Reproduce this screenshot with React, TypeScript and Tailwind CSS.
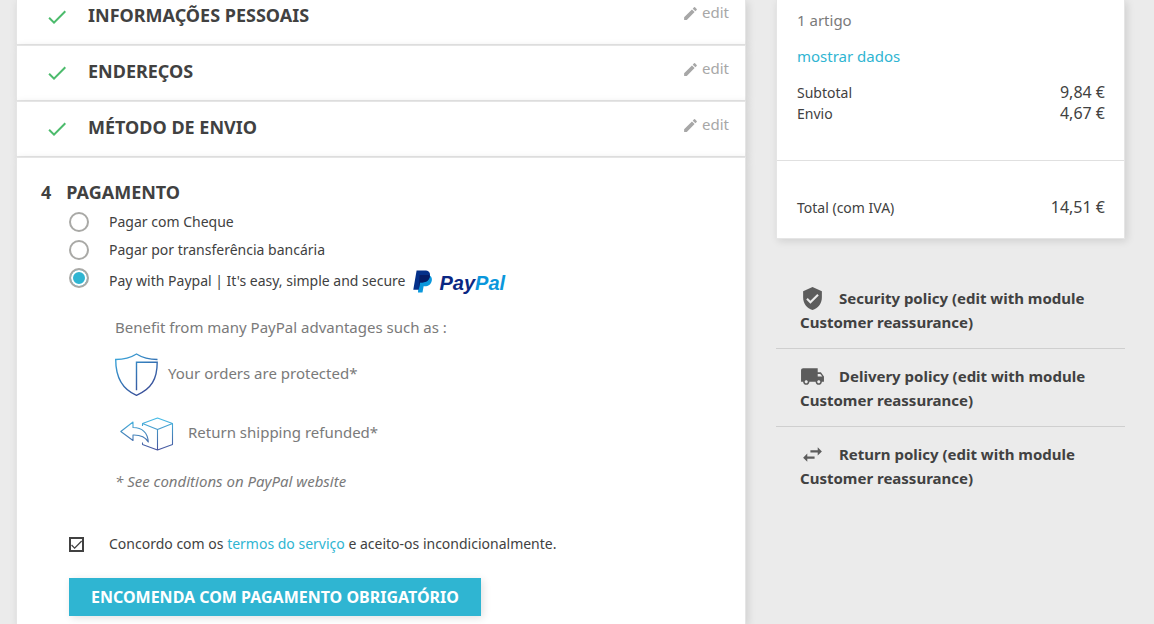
import type { ReactNode } from "react";
import {
  MdDone,
  MdEdit,
  MdLocalShipping,
  MdSwapHoriz,
  MdVerifiedUser,
} from "react-icons/md";

function DoneStep({ title, first = false }: { title: string; first?: boolean }) {
  return (
    <section
      className={
        "flex items-start justify-between border-x border-b border-[#e5e5e5] bg-white pr-4 pl-7 shadow-[2px_2px_8px_0_rgba(0,0,0,0.12)] " +
        (first ? "h-[45px]" : "h-14 border-t pt-2.5")
      }
    >
      <h1 className="flex items-center text-lg leading-[30px] font-bold text-[#414141] uppercase">
        <MdDone className="mt-1 mr-[19px] size-6 text-[#4cbb6c]" />
        {title}
      </h1>
      <button type="button" className="flex items-center gap-[3px] text-[15px] leading-6 text-[#a7a7a7]">
        <MdEdit className="mt-0.5 size-[17px]" />
        edit
      </button>
    </section>
  );
}

function PaymentOption({
  id,
  checked = false,
  children,
}: {
  id: string;
  checked?: boolean;
  children: ReactNode;
}) {
  return (
    <div className="flex min-h-7 items-start">
      <input
        type="radio"
        name="payment"
        id={id}
        defaultChecked={checked}
        className="mt-1 mr-5 size-5 shrink-0 appearance-none rounded-full border-2 border-[#a9a9a6] bg-white checked:bg-[#2fb5d2] checked:shadow-[inset_0_0_0_2px_#fff]"
      />
      <label htmlFor={id} className="flex items-center text-sm leading-7 text-[#414141]">
        {children}
      </label>
    </div>
  );
}

function PayPalLogo() {
  return (
    <span className="mt-1 ml-2 flex h-6 items-center gap-[7px]">
      <svg viewBox="0 0 19 23" className="h-[23px] w-[19px]" aria-hidden="true">
        <path d="M6 5h9.500c3 1 3.800 3.200 3.200 6-.8 3.700-3.300 5.200-6.900 5.200h-1.200L9.500 22.500H5z" fill="#0a97dc" />
        <path d="M3.600 0.500h7.900c4.200 0 6.100 2 5.400 5.800-.8 4.200-3.600 6.100-7.600 6.100H7.100L5.700 19.700H.3z" fill="#04308a" />
        <path d="M6.600 5h9c.9.300 1.300.7 1.300 1.300-.8 4.200-3.600 6.100-7.600 6.100H7.100L6 18z" fill="#051c66" />
      </svg>
      <span className="mt-0.5 font-['Liberation_Sans',sans-serif] text-xl leading-6 font-bold text-[#0a2783] italic">
        Pay<span className="text-[#0a97dc]">Pal</span>
      </span>
    </span>
  );
}

function ShieldIcon() {
  return (
    <svg viewBox="0 0 43 43" className="h-[43px] w-[43px]" fill="none" stroke="url(#shieldTone)" strokeWidth="1.400" aria-hidden="true">
      <defs>
        <linearGradient id="shieldTone" x1="0" y1="0" x2="30" y2="43" gradientUnits="userSpaceOnUse">
          <stop stopColor="#3fb0e2" />
          <stop offset="0.500" stopColor="#3479b9" />
          <stop offset="1" stopColor="#3b4a95" />
        </linearGradient>
      </defs>
      <path d="M42.500 6.500C34 6.500 27 4.500 21.500 1 16 4.500 9 6.500 .7 6.500c0 17 5.800 29.500 20.800 35.800C36.500 36 42.200 26 42.200 9.300H21.500v28" />
    </svg>
  );
}

function ReturnBoxIcon() {
  return (
    <svg viewBox="0 0 54 34" className="h-[34px] w-[54px]" fill="none" stroke="url(#boxTone)" strokeWidth="1.100" strokeLinejoin="round" aria-hidden="true">
      <defs>
        <linearGradient id="boxTone" x1="0" y1="0" x2="0" y2="34" gradientUnits="userSpaceOnUse">
          <stop stopColor="#45c0ea" />
          <stop offset="0.500" stopColor="#4688bd" />
          <stop offset="1" stopColor="#474f9b" />
        </linearGradient>
      </defs>
      <path d="M22.500 9V6.500L37.500 1l15 5.500v21L37.500 33l-15-5.500v-2M22.500 6.500l15 6 15-6M37.500 12.500V33" />
      <path d="M.8 14.500 13 5v5.500c9 .2 14.500 4 15.300 14.500C25.500 20 20 17.800 13 18v5.500z" />
    </svg>
  );
}

function Policy({ icon, title, last = false }: { icon: ReactNode; title: string; last?: boolean }) {
  return (
    <li className={"px-6 pt-[15px] pb-[14px] " + (last ? "" : "border-b border-[#cfcfcf]")}>
      <p className="text-[15px] leading-6 font-bold text-[#414141]">
        <span className="mr-3.5 inline-block h-6 align-top text-[25px] text-[#5c5c5c]">{icon}</span>
        {title}
      </p>
    </li>
  );
}

export default function App() {
  return (
    <div className="flex min-h-screen justify-center bg-[#ebebeb] pr-[29px] pl-4 font-['Noto_Sans',sans-serif]">
      <div className="grid w-full grid-cols-[730fr_349fr] gap-[30px]">
        <main className="flex flex-col">
          <DoneStep title="Informações Pessoais" first />
          <DoneStep title="Endereços" />
          <DoneStep title="Método de Envio" />

          <section className="grow border-x border-t border-[#e5e5e5] bg-white px-6 pt-[19px] pb-1 shadow-[2px_2px_8px_0_rgba(0,0,0,0.12)]">
            <h1 className="flex gap-[15px] text-lg leading-[30px] font-bold text-[#414141] uppercase">
              <span>4</span>Pagamento
            </h1>
            <form className="mt-px pl-7" onSubmit={(e) => e.preventDefault()}>
              <PaymentOption id="cheque">Pagar com Cheque</PaymentOption>
              <PaymentOption id="transfer">Pagar por transferência bancária</PaymentOption>
              <PaymentOption id="paypal" checked>
                <span className="mt-[3px]">Pay with Paypal | It's easy, simple and secure</span>
                <PayPalLogo />
              </PaymentOption>

              <div className="pt-5 pl-[46px] text-[15px] leading-6 text-[#7a7a7a]">
                <p>Benefit from many PayPal advantages such as :</p>
                <div className="mt-3.5 flex items-center gap-2.5">
                  <ShieldIcon />
                  <span className="pb-1">Your orders are protected*</span>
                </div>
                <div className="mt-[21px] flex items-center gap-3.5 pl-[5px]">
                  <ReturnBoxIcon />
                  <span className="pb-1">Return shipping refunded*</span>
                </div>
                <p className="mt-[18px] italic">* See conditions on PayPal website</p>
              </div>

              <div className="mt-[39px] flex items-center">
                <span className="relative mr-[25px] size-[15px]">
                  <input
                    type="checkbox"
                    id="terms"
                    defaultChecked
                    className="peer block size-[15px] appearance-none border-2 border-[#414141] bg-white"
                  />
                  <MdDone className="pointer-events-none absolute inset-0 hidden size-[15px] text-[#414141] peer-checked:block" />
                </span>
                <label htmlFor="terms" className="text-sm leading-6 text-[#414141]">
                  Concordo com os{" "}
                  <a href="#termos" className="text-[#2fb5d2]">
                    termos do serviço
                  </a>{" "}
                  e aceito-os incondicionalmente.
                </label>
              </div>

              <button
                type="submit"
                className="mt-[22px] bg-[#2fb5d2] px-[22px] py-[7px] text-base leading-6 font-bold text-white uppercase shadow-[2px_2px_8px_0_rgba(0,0,0,0.12)]"
              >
                Encomenda com pagamento obrigatório
              </button>
            </form>
          </section>
        </main>

        <aside>
          <section className="border-x border-b border-[#e5e5e5] bg-white text-[#414141] shadow-[2px_2px_8px_0_rgba(0,0,0,0.12)]">
            <div className="border-b border-[#e0e0e0] pr-[19px] pl-5 pt-2 pb-9">
              <p className="text-[15px] leading-6 text-[#7a7a7a]">1 artigo</p>
              <a href="#dados" className="mt-3 mb-[14px] block text-[15px] leading-6 text-[#2fb5d2]">
                mostrar dados
              </a>
              <dl>
                <div className="flex items-center justify-between leading-[21px]">
                  <dt className="text-sm leading-[21px]">Subtotal</dt>
                  <dd className="text-base leading-[21px]">9,84 €</dd>
                </div>
                <div className="flex items-center justify-between leading-[21px]">
                  <dt className="text-sm leading-[21px]">Envio</dt>
                  <dd className="text-base leading-[21px]">4,67 €</dd>
                </div>
              </dl>
            </div>
            <dl className="flex items-center justify-between pr-[19px] pl-5 pt-9 pb-5">
              <dt className="text-sm leading-[21px]">Total (com IVA)</dt>
              <dd className="text-base leading-[21px]">14,51 €</dd>
            </dl>
          </section>

          <ul className="mt-8">
            <Policy icon={<MdVerifiedUser />} title="Security policy (edit with module Customer reassurance)" />
            <Policy icon={<MdLocalShipping />} title="Delivery policy (edit with module Customer reassurance)" />
            <Policy icon={<MdSwapHoriz />} title="Return policy (edit with module Customer reassurance)" last />
          </ul>
        </aside>
      </div>
    </div>
  );
}
